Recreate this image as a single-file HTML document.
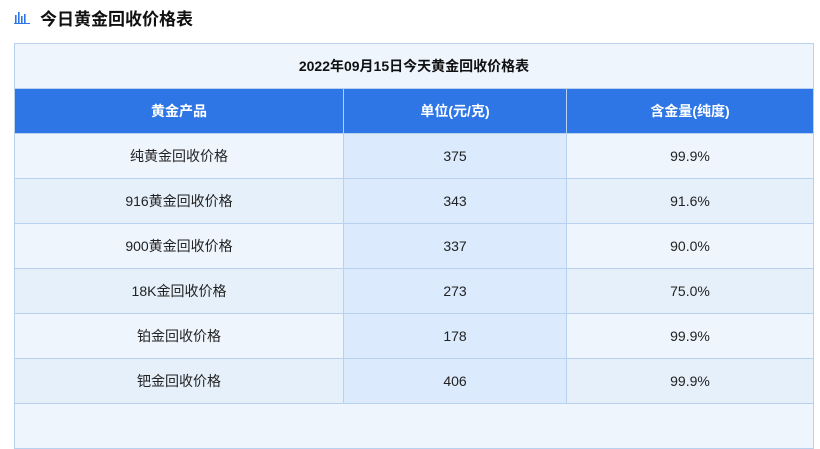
<!DOCTYPE html><html><head><meta charset="utf-8"><style>
body{margin:0;width:820px;height:408px;overflow:hidden;background:#fff;font-family:"Liberation Sans","Noto Sans CJK SC",sans-serif;}
.t{position:absolute;left:14px;top:4px;font-size:17px;font-weight:bold;color:#111;display:flex;align-items:center;height:26px}
.t svg{margin-right:10px}
table{position:absolute;left:14px;top:43px;width:800px;border-collapse:collapse;table-layout:fixed}
td{border:1px solid #b8d1ef;height:44px;text-align:center;font-size:14px;color:#222;padding:0}
.cap td{background:#eef5fd;font-weight:bold;color:#111}
.hd td{background:#2e75e6;color:#fff;font-weight:bold;border-color:#b8d1ef}
tr.a td{background:#eef5fd} tr.b td{background:#e6f0fa}
tr.a td:nth-child(2),tr.b td:nth-child(2){background:#dbeafc}
</style></head><body>
<div class="t"><svg width="16" height="14" viewBox="0 0 16 14"><g fill="#2e75e6"><rect x="1" y="5" width="1.6" height="8"/><rect x="4" y="2" width="1.6" height="11"/><rect x="7" y="6" width="1.6" height="7"/><rect x="10" y="4" width="1.6" height="9"/><rect x="0" y="13" width="16" height="1"/></g></svg>今日黄金回收价格表</div>
<table><colgroup><col style="width:329px"><col style="width:223px"><col></colgroup>
<tr class="cap"><td colspan="3">2022年09月15日今天黄金回收价格表</td></tr>
<tr class="hd"><td>黄金产品</td><td>单位(元/克)</td><td>含金量(纯度)</td></tr>
<tr class="a"><td>纯黄金回收价格</td><td>375</td><td>99.9%</td></tr>
<tr class="b"><td>916黄金回收价格</td><td>343</td><td>91.6%</td></tr>
<tr class="a"><td>900黄金回收价格</td><td>337</td><td>90.0%</td></tr>
<tr class="b"><td>18K金回收价格</td><td>273</td><td>75.0%</td></tr>
<tr class="a"><td>铂金回收价格</td><td>178</td><td>99.9%</td></tr>
<tr class="b"><td>钯金回收价格</td><td>406</td><td>99.9%</td></tr>
<tr class="a"><td colspan="3"></td></tr>
</table></body></html>
